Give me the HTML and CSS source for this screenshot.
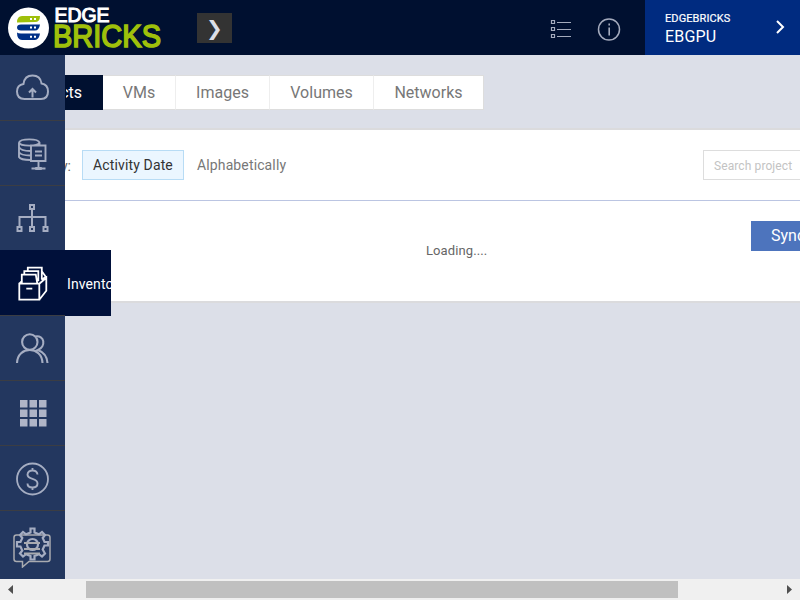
FILE: index.html
```html
<!DOCTYPE html>
<html lang="en">
<head>
<meta charset="utf-8">
<title>Edgebricks</title>
<link rel="stylesheet" href="styles.css">
</head>
<body>
<header class="topbar">
  <div class="logo">
    <svg class="logo-mark" width="41" height="42" viewBox="0 0 41 42">
      <circle cx="20.5" cy="21" r="20.5" fill="#fff"/>
      <path d="M9 15.500Q9 9 14 9H32Q32 15 27 15Z" fill="#9fc00b"/>
      <path d="M13 17.500H32Q31 23.500 27 23.500H13Q9 23.500 9 20.500Q9 17.500 13 17.500Z" fill="#003087"/>
      <path d="M9 25.500Q10 26.500 13 26.500H32Q31 33 27 33H14Q9 33 9 25.500Z" fill="#003087"/>
      <path d="M22 12h2M26 12h2M22 20.500h2M26 20.500h2M22 29.700h2M26 29.700h2" stroke="#fff" stroke-width="2"/>
    </svg>
    <svg class="logo-name" width="108" height="48" viewBox="0 0 108 48">
      <text class="edge" x="-.5" y="18" textLength="55" lengthAdjust="spacingAndGlyphs">EDGE</text>
      <text class="bricks" x="-2" y="42.800" textLength="108" lengthAdjust="spacingAndGlyphs">BRICKS</text>
    </svg>
  </div>
  <button class="expand">❯</button>
  <div class="tools">
    <svg class="list" width="21" height="20" viewBox="0 0 21 20" fill="none" stroke="#a4abbd">
      <path d="M1.500 1.500h3v3h-3zM1.500 8.500h3v3h-3zM1.500 15.500h3v3h-3zM7 3.500h14M7 10.500h14M7 17.500h14" stroke-width="1.200"/>
    </svg>
    <svg width="24" height="24" viewBox="0 0 24 24" fill="none" stroke="#a4abbd">
      <circle cx="12" cy="11.500" r="10.500" stroke-width="1.500"/>
      <path d="M12.200 9.500v8M12.200 5.500v2" stroke-width="1.600"/>
    </svg>
  </div>
  <div class="account">
    <div><div class="org">EDGEBRICKS</div><div class="project">EBGPU</div></div>
    <svg width="10" height="14" viewBox="0 0 10 14" fill="none" stroke="#fff" stroke-width="2"><path d="M1 1l6 6-6 6"/></svg>
  </div>
</header>
<div class="body">
  <nav class="sidebar">
    <a class="item"><svg width="40" height="40" viewBox="0 0 40 40"><path d="M12.500 31Q5 31 5 23.500Q5 17 11.500 16Q12.500 7.500 20.500 7.500T29.500 15.500Q36 16.500 36 23.500Q36 31 29 31ZM20.500 29.500V21M17 24.500L20.500 21l3.500 3.500" stroke-width="2"/></svg></a>
    <a class="item"><svg width="40" height="40" viewBox="-.500 0 40 40"><path d="M6.500 9.500a10.300 3.500 0 0 1 20.500 0a10.300 3.500 0 0 1-20.500 0V24Q8 27 18 27M6.500 14Q8 18 18 18M6.500 19Q8 22.500 18 22.500M27 9.500V12M18.500 12.500H33V28H18.500ZM22.500 18.500h7M22.500 22.500h7M26 28v7M19 35.500h14" stroke-width="1.900"/><path d="M23 34.500h6v2h-6z"/></svg></a>
    <a class="item"><svg width="40" height="40" viewBox="-.500 -.500 40 40"><path d="M17.500 6.500h4v4h-4zM5 28.500h4v4H5zM17.500 28.500h4v4h-4zM31 28.500h4v4h-4zM19.500 11v17M7 28v-9.500h26V28" stroke-width="2"/></svg></a>
    <a class="item active"><svg width="40" height="40" viewBox="-.800 -.700 40 40"><path d="M6.500 20H26.500V36H6.500ZM26.500 36l7-9V14l-7 6M6.500 20l3-3M9 19V11h14l1.500 9M11.500 11V7.500h14v10M15 7.500V4h14V16M29 7.500l4 5.500-4 3M13.500 25h6" stroke-width="1.800"/></svg><span>Inventory</span></a>
    <a class="item"><svg width="40" height="40" viewBox="0 -.500 40 40"><path d="M25.500 13.500a7.700 7.700 0 1 1-15.400 0a7.700 7.700 0 1 1 15.400 0ZM5 34.500C5.500 17 30 17 30.500 34.500M23 8C33 6 34 18 26 21.500Q35 25 35.500 34.500" stroke-width="2.100"/></svg></a>
    <a class="item"><svg width="40" height="40" viewBox="0 0 40 40"><path class="solid" d="M8 7h7.500v7.500H8zM17.500 7h7.500v7.500h-7.500zM27 7h7.500v7.500h-7.500zM8 16.500h7.500v7.500H8zM17.500 16.500h7.500v7.500h-7.500zM27 16.500h7.500v7.500h-7.500zM8 26h7.500v7.500H8zM17.500 26h7.500v7.500h-7.500zM27 26h7.500v7.500h-7.500z"/></svg></a>
    <a class="item"><svg width="40" height="40" viewBox="-.500 -.500 40 40"><circle cx="20" cy="20.500" r="15.500" stroke-width="1.800"/><path d="M25 16Q24.500 12 20 12T15 16Q15 19 20 20.300T25 25Q25 29 20 29T15 25M20 9.500V12M20 29v2.500" stroke-width="1.900"/></svg></a>
    <a class="item"><svg width="40" height="44" viewBox="0 0 40 44"><path d="M4.500 11H35.500Q38 11 38 13.500V35Q38 37.500 35.500 37.500H17L10.500 43V37.500H4.500Q2 37.500 2 35V13.500Q2 11 4.500 11Z" stroke="#a9abb0" stroke-width="1.500"/><path d="M18.500 8.500V4.500h4v4l4.500 1.800 3-2.300 3 3-2.300 3 1.800 4H36v3.500h-3.500l-1.800 4L33 29.500l-3 3-3-2.300-4.500 1.800v3.500h-4V32l-4.500-1.800-3 2.300-3-3 2.300-3-1.800-4H5V18h3.500l1.800-4L8 11l3-3 3 2.300ZM26 20.500a5.500 5.500 0 1 1-11 0a5.500 5.500 0 1 1 11 0Z" stroke-width="2.200"/><path d="M12 19h16M12 25h16M12 29.500h16" stroke="#a9abb0" stroke-width="1.900"/></svg></a>
  </nav>
  <main>
    <div class="tabs">
      <a class="tab selected"><span>Projects</span></a><a class="tab vms">VMs</a><a class="tab images">Images</a><a class="tab volumes">Volumes</a><a class="tab networks">Networks</a>
    </div>
    <section class="panel">
      <div class="filters">
        <span class="label"><span>Sort By:</span></span>
        <a class="sort chosen">Activity Date</a><a class="sort">Alphabetically</a>
        <input class="search" placeholder="Search project">
      </div>
      <div class="content"><span class="loading">Loading....</span><button class="sync">Sync</button></div>
    </section>
  </main>
</div>
<footer class="scrollbar">
  <svg width="5" height="9" viewBox="0 0 5 9"><path d="M5 0v9L0 4.500z"/></svg>
  <div class="thumb"></div>
  <svg width="5" height="9" viewBox="0 0 5 9"><path d="M0 0v9l5-4.500z"/></svg>
</footer>
</body>
</html>
```
FILE: styles.css
```css
* { box-sizing: border-box; }
body {
  margin: 0;
  height: 600px;
  display: flex;
  flex-direction: column;
  overflow: hidden;
  background: #dcdfe8;
  font-family: Roboto, sans-serif;
}
button { border: 0; font-family: inherit; }
.topbar { flex: none; height: 55px; display: flex; background: #001030; color: #fff; }
.logo { display: flex; width: 197px; padding: 7px 0 0 8px; gap: 6px; }
.logo-mark { flex: none; }
.logo-name { flex: none; margin-top: -3px; overflow: visible; font-family: "Liberation Sans", sans-serif; }
.edge { font-size: 20px; fill: #fff; stroke: #fff; stroke-width: 1.1px; }
.bricks { font-size: 31px; fill: #9fc00b; stroke: #9fc00b; stroke-width: 1.6px; }
.expand {
  width: 35px;
  height: 30px;
  margin-top: 13px;
  padding: 0;
  background: #333;
  color: #dcdfe8;
  font: 20px/28px "DejaVu Sans", sans-serif;
}
.tools { display: flex; align-items: center; gap: 26px; margin-left: 318px; padding-top: 4px; }
.list { margin-top: -1px; }
.account {
  margin-left: auto;
  width: 155px;
  display: flex;
  justify-content: space-between;
  padding: 11px 14px 0 20px;
  background: #002b80;
}
.account svg { margin-top: 9px; }
.org { font-size: 11px; line-height: 15px; letter-spacing: .1px; -webkit-text-stroke: .2px; }
.project { font-size: 16px; line-height: 22px; letter-spacing: .2px; }
.body { flex: 1; min-height: 0; display: flex; }
.sidebar { flex: none; width: 65px; position: relative; z-index: 1; background: #23375f; overflow-x: visible; }
.item { display: flex; width: 65px; height: 65px; padding: 12px 0 0 12px; background: #23375f; border-top: 1px solid #3b3d43; }
.item:first-child { border-top-color: #23375f; }
.item:last-child { height: 69px; padding-top: 13px; }
.item svg { flex: none; fill: none; stroke: #a5adc2; }
.item .solid { fill: #b0b5c7; stroke: none; }
.item.active {
  width: 111px;
  height: 66px;
  margin-bottom: -1px;
  background: #00103a;
  border-color: #00103a;
  color: #fff;
  font-size: 14px;
  line-height: 42px;
  overflow: hidden;
  letter-spacing: .1px;
}
.item.active svg { stroke: #fff; }
.active span { margin-left: 15px; }
main { flex: 1; min-width: 0; overflow: hidden; padding-top: 20px; }
.tabs { display: flex; align-items: center; height: 35px; }
.tab {
  height: 35px;
  border: 1px solid #ddd;
  border-left-color: #eee;
  border-width: 1px 0 1px 1px;
  background: #fff;
  color: #777;
  font-size: 16px;
  line-height: 33px;
  text-align: center;
}
.selected {
  width: 38px;
  display: flex;
  justify-content: flex-end;
  padding-right: 21px;
  overflow: hidden;
  background: #001030;
  border-color: #001030;
  color: #fff;
}
.vms { width: 72px; border-left: 0; }
.images { width: 94px; }
.volumes { width: 104px; }
.networks { width: 111px; border-right: 1px solid #ddd; }
.panel { margin-top: 18px; height: 175px; background: #fff; border: 2px solid #dbdbdd; border-width: 2px 0; }
.filters { height: 71px; padding-top: 20px; display: flex; border-bottom: 1px solid #bbc5e2; }
.label { width: 17px; display: flex; justify-content: flex-end; padding-right: 11px; color: #666; font-size: 14px; line-height: 33px; white-space: nowrap; }
.sort { height: 30px; padding: 0 13px; color: #777; font-size: 14px; line-height: 30px; letter-spacing: .13px; }
.chosen { width: 102px; padding: 0; border: 1px solid #b8dcf5; background: #ebf6ff; color: #333; line-height: 28px; text-align: center; }
.search { flex: none; margin-left: auto; margin-right: -80px; width: 177px; height: 30px; padding: 1px 10px 0; border: 1px solid #ddd; font: 12px Roboto, sans-serif; letter-spacing: .1px; }
.search::placeholder { color: #c3c3c3; opacity: 1; }
.content { display: flex; padding-top: 20px; }
.loading { width: 686px; flex: none; padding: 20px 0 0 361px; color: #666; font-size: 13px; line-height: 20px; letter-spacing: .1px; }
.sync { flex: none; width: 80px; height: 30px; padding: 0 0 0 20px; background: #4d74bd; color: #fff; font-size: 16px; line-height: 30px; text-align: left; }
.scrollbar { flex: none; height: 21px; display: flex; align-items: center; padding: 0 8px; background: #f0f0f0; }
.scrollbar svg { fill: #505050; }
.thumb { width: 592px; height: 17px; margin: 0 auto 0 73px; background: #c0c0c0; }
```
